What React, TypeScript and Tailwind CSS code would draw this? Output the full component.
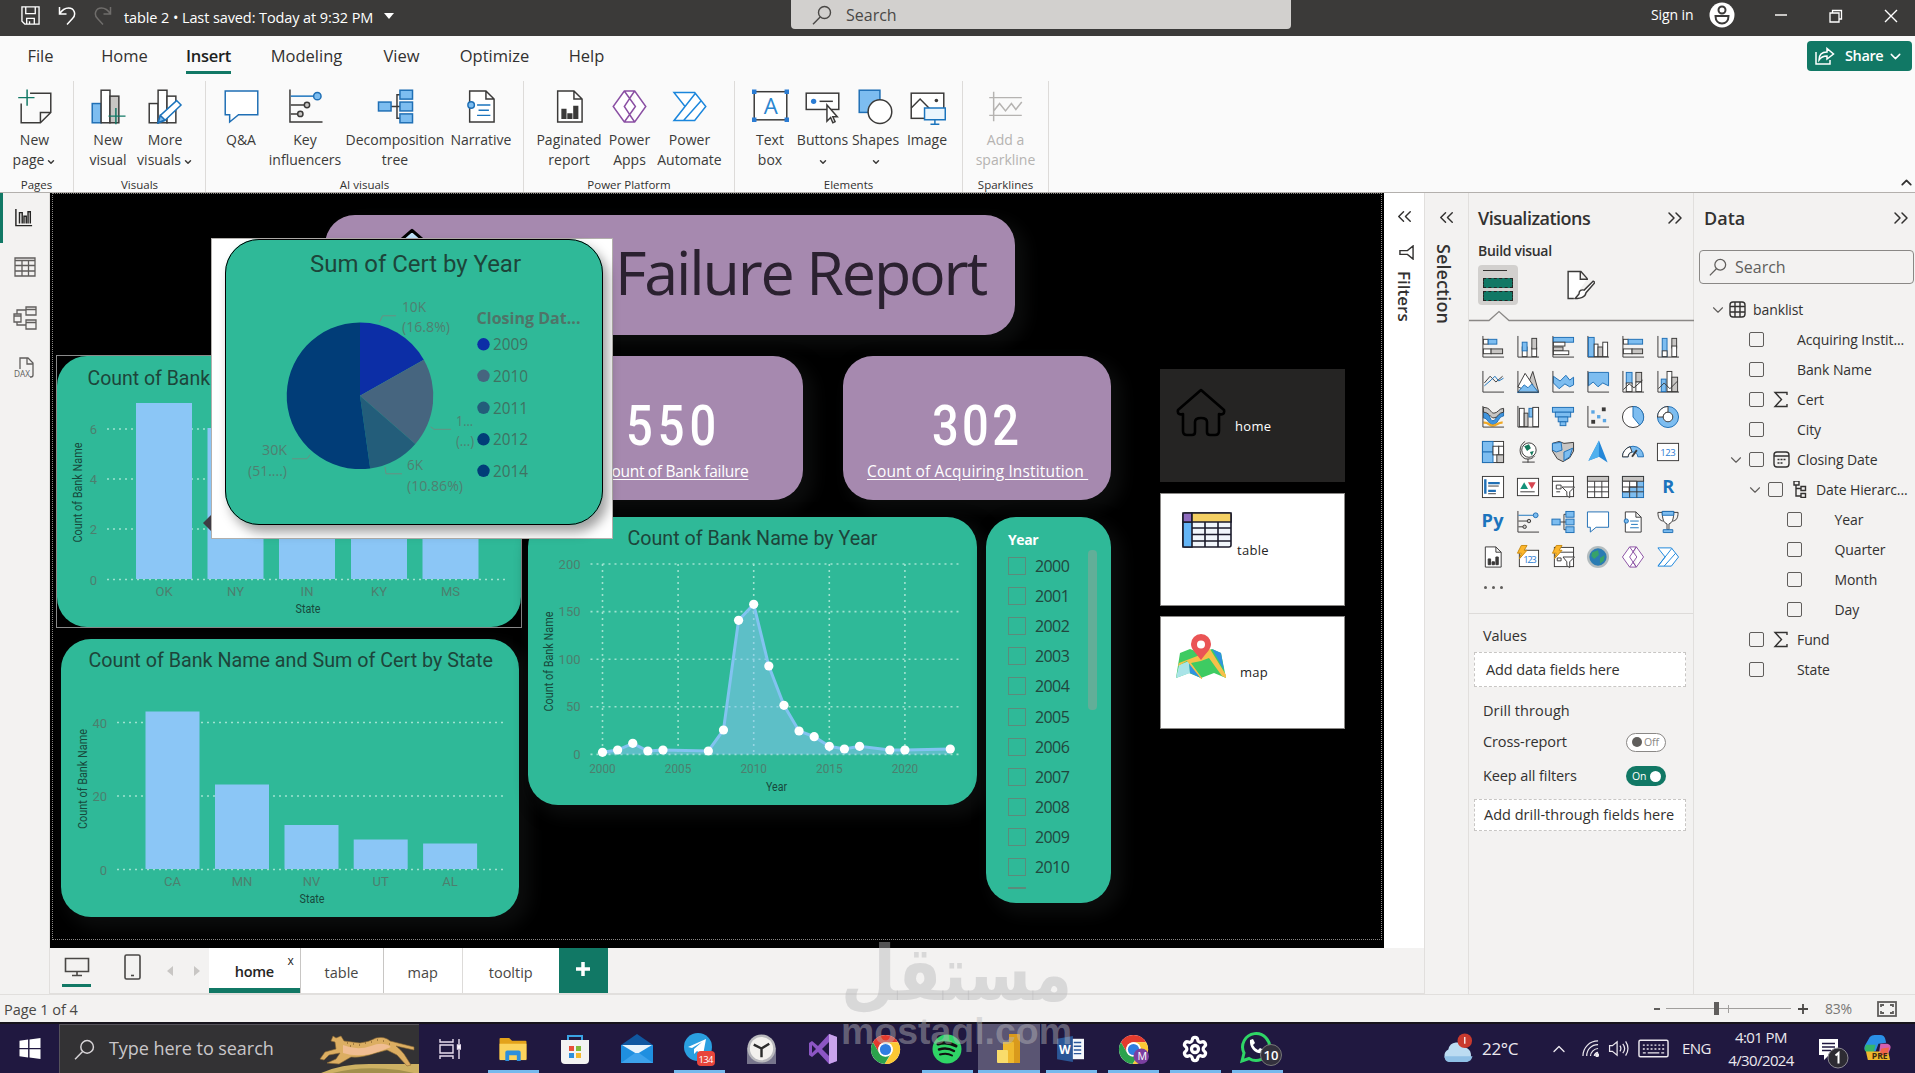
import type { ReactNode } from "react";
import { ChevronDown, ChevronUp, ChevronsLeft, ChevronsRight, Settings } from "lucide-react";
import clsx from "clsx";

const SANS = "font-['Open_Sans','Noto_Sans',sans-serif]";
const DIN = "font-['Roboto',sans-serif]";

const B = "fill-[#7dbdf0] stroke-[#1f6fb5]";
const G = "fill-[#c8c6c4] stroke-[#3b3a39]";
const W = "fill-white stroke-[#3b3a39]";
const L = "fill-none stroke-[#3b3a39]";
const BL = "fill-none stroke-[#1b74bd]";

function R({ x, y, w, h, c }: { x: number; y: number; w: number; h: number; c: string }) {
  return <rect x={x} y={y} width={w} height={h} className={c} />;
}

const axis = <path d="M1.5 .5v22h22" className={L} />;
const page = <path d="M4 1.5h11l5.500 5.500v15.500h-16.500zM15 1.500v5.500h5.500" className={W} />;
const bolt = <path d="M5 0h6l-3 5h3l-8 9 2-6h-4z" className="fill-[#fcb62c] stroke-[#c98a12]" />;

const ART: Record<string, ReactNode> = {
  stackedBar: <>{axis}<R x={2} y={4} w={5} h={5} c={W} /><R x={7} y={4} w={9} h={5} c={B} /><R x={2} y={14} w={8} h={5} c={W} /><R x={10} y={14} w={12} h={5} c={G} /></>,
  stackedColumn: <>{axis}<R x={6} y={12} w={5} h={10} c={W} /><R x={6} y={7} w={5} h={9} c={B} /><R x={16} y={13} w={5} h={9} c={W} /><R x={16} y={3} w={5} h={11} c={G} /></>,
  bar: <>{axis}<R x={2} y={2} w={21} h={5} c={B} /><R x={2} y={7} w={12} h={4} c={W} /><R x={2} y={12} w={10} h={4} c={G} /><R x={2} y={16} w={16} h={4} c={W} /></>,
  column: <>{axis}<R x={2} y={2} w={6} h={20} c={B} /><R x={8} y={9} w={4} h={13} c={W} /><R x={12} y={12} w={5} h={10} c={G} /><R x={17} y={7} w={5} h={15} c={W} /></>,
  bar100: <>{axis}<R x={2} y={4} w={5} h={5} c={W} /><R x={7} y={4} w={15} h={5} c={B} /><R x={2} y={14} w={9} h={5} c={W} /><R x={11} y={14} w={11} h={5} c={G} /></>,
  column100: <>{axis}<R x={6} y={3} w={5} h={19} c={B} /><R x={6} y={16} w={5} h={6} c={W} /><R x={16} y={3} w={5} h={10} c={G} /><R x={16} y={11} w={5} h={11} c={W} /></>,
  line: <>{axis}<path d="M3 13l6-7 6 6 7-6" className={L} /><path d="M3 16l7-6 4-4 4 5 5-3" className={BL} /></>,
  area: <><path d="M11 17L17 1l6 21z" className={G} /><path d="M1.500 17L9 3l8 12-5 7z" className={W} /><path d="M1 23l7-8 4 3 4-4 7 9z" className={B} />{axis}</>,
  stackedArea: <><path d="M2 6l7 5 6-6 4 5 4-3v8l-4 2-5-3-6 5-6-6z" className={B} />{axis}</>,
  area100: <><path d="M2 2h21v14l-6-3-5 4-5-5-5 4z" className={B} />{axis}</>,
  lineColumn: <>{axis}<R x={5} y={2} w={6} h={12} c={B} /><R x={5} y={13} w={6} h={9} c={W} /><R x={15} y={2} w={6} h={10} c={G} /><R x={15} y={12} w={6} h={10} c={W} /><path d="M2 20l6-6 5 4 9-8" className={L} /></>,
  lineCluster: <>{axis}<R x={5} y={9} w={5} h={13} c={B} /><R x={11} y={1} w={5} h={21} c={W} /><R x={16} y={7} w={6} h={15} c={G} /><path d="M2 19l6-6 6 6 8-8" className={L} /></>,
  ribbon: <><path d="M2 6c7 0 6 10 10 10s5-12 11-12v7c-5 0-6 9-11 9S7 13 2 13z" className="fill-[#3f93dc] stroke-[#1f6fb5]" /><path d="M2 2c8 0 7 6 11 6s5-5 10-5v4c-5 0-6 6-10 6S8 7 2 7z" className={G} /><path d="M2 18c5-1 6 3 10 3s6-4 10-3" className="fill-none stroke-[#f0a824] stroke-[2.500]" />{axis}</>,
  waterfall: <>{axis}<R x={3} y={3} w={5} h={19} c={W} /><R x={8} y={8} w={4} h={14} c={G} /><R x={13} y={3} w={4} h={9} c={B} /><R x={17} y={2} w={6} h={20} c={W} /></>,
  funnel: <><R x={1} y={2} w={22} h={5} c={B} /><R x={4} y={7} w={16} h={5} c={B} /><R x={7} y={12} w={10} h={5} c={B} /><R x={9} y={17} w={6} h={4} c={B} /></>,
  scatter: <>{axis}<rect x="16" y="2" width="4" height="4" fill="#3b3a39" /><rect x="5" y="5" width="3.500" height="3.500" fill="#5aa6e4" /><rect x="11" y="10" width="3.500" height="3.500" fill="#5aa6e4" /><rect x="5" y="15" width="4" height="4" fill="#3b3a39" /><rect x="17" y="14" width="3.500" height="3.500" fill="#5aa6e4" /></>,
  pie: <><circle cx="12" cy="12" r="11" className={W} /><path d="M12 1a11 11 0 0 1 7 19.500L12 12z" className={B} /></>,
  donut: <><circle cx="12" cy="12" r="11" className={B} /><path d="M12 1A11 11 0 0 0 1 12h6a5 5 0 0 1 5-5z" className={W} /><circle cx="12" cy="12" r="5" className={W} /></>,
  treemap: <><R x={1} y={1} w={22} h={22} c={W} /><R x={1} y={1} w={11} h={11} c={B} /><R x={1} y={12} w={11} h={11} c={B} /><R x={12} y={6} w={6} h={9} c={W} /><R x={18} y={6} w={5} h={9} c={W} /><R x={16} y={15} w={7} h={8} c={G} /></>,
  map: <><circle cx="13" cy="10" r="7.500" className={W} /><path d="M8 6l5-2 2 4-4 3zM14 12l4-1-2 5z" fill="#15795c" /><path d="M9 1C2 5 2 16 9 19c4 1 8 0 10-3M12 19v4M6 22.500h13" className={L} /></>,
  filledMap: <><path d="M1 3l7-2 5 2 10-1v9l-4 7-7 4-6-3-5-8z" className={G} /><path d="M1 3l9-1 1 8-6 2-4-2zM13 12l9-4-3 9-6 4z" className={B} /></>,
  azureMap: <><path d="M13 0l9 23-9-6-11 4z" fill="#2487d8" /><path d="M13 0v17l-11 4z" fill="#4fb0ee" /></>,
  gauge: <><path d="M1 17a11 11 0 0 1 22 0h-6a5 5 0 0 0-10 0z" className={B} /><path d="M1 17A11 11 0 0 1 9 6.500l2 5.500a5 5 0 0 0-4 5z" className={W} /><path d="M11 17l5-7" className="stroke-[#3b3a39] stroke-2" /></>,
  card: <><R x={1} y={3} w={22} h={18} c={W} /><text x="4" y="16" textLength="16" className="fill-[#2b7cd3] text-[10px]">123</text></>,
  multiCard: <><R x={1} y={1} w={22} h={22} c={W} /><path d="M4 4v15M7 8h12M7 16h8" className="stroke-[#1f6fb5] stroke-[2.500]" /><path d="M7 11h11M7 19h8" className={L} /></>,
  kpi: <><R x={1} y={3} w={22} h={18} c={W} /><path d="M4 14l4-7 4 7z" fill="#14917a" /><path d="M12 7h8l-4 7z" fill="#d64550" /><path d="M4 17h15" className={L} /></>,
  slicer: <><R x={1} y={1} w={22} h={21} c={W} /><path d="M1 6h22M5 10h5v4h-5zM5 17h4" className={L} /><path d="M11 12h13l-5 5v6l-3-2v-4z" className={W} /></>,
  table: <><R x={1} y={1} w={22} h={22} c={W} /><R x={1} y={1} w={22} h={5} c={G} /><path d="M1 12h22M1 17h22M8.500 6v17M16 6v17" className={L} /></>,
  matrix: <><R x={1} y={1} w={22} h={22} c={B} /><R x={1} y={1} w={22} h={5} c={G} /><path d="M1 6h15v6h-8v5H1z" className={W} /><path d="M1 12h22M1 17h22M8.500 6v17M16 6v17" className={L} /></>,
  r: <text x="6" y="18" className="fill-[#1b74bd] text-[19px] font-bold">R</text>,
  py: <text x="0" y="17" textLength="23" className="fill-[#1b74bd] text-[19px] font-bold">Py</text>,
  key: <>{axis}<path d="M2 5h17" className={BL} /><path d="M2 11h10M2 17h6" className={L} /><circle cx="20" cy="5" r="2.500" className={B} /><circle cx="13" cy="11" r="1.800" className={G} /><circle cx="8.500" cy="17" r="1.800" className={G} /></>,
  tree: <><path d="M9 12h4M18 4h-5v16h5M13 12h5" className={L} /><R x={.500} y={9} w={8.500} h={6} c={B} /><R x={15} y={1} w={8.500} h={6} c={B} /><R x={15} y={9} w={8.500} h={6} c={B} /><R x={15} y={17} w={8.500} h={6} c={B} /></>,
  qa: <path d="M1 1.500h22v16h-13l-6 5v-5h-3z" className="fill-white stroke-[#1f6fb5]" />,
  narrative: <>{page}<path d="M9 11h9M10 14.500h7M9 18h9" className={BL} /><circle cx="5" cy="11" r="2.200" className={B} /></>,
  trophy: <><path d="M6 2H1.500c0 6 2 9 6 9M18 2h4.500c0 6-2 9-6 9" className={L} /><path d="M6 1h12c0 9-2 12-5 13v6h-2v-6C8 13 6 10 6 1z" className={W} /><path d="M6 1h12v4H6zM7 20h10v3H7z" className={B} /></>,
  paginated: <>{page}<path d="M7 20v-6h2.500v6zM11 20v-3h2.500v3zM15 20v-8h2.500v8z" className="fill-[#3b3a39] stroke-[#3b3a39]" /></>,
  cardNew: <><R x={3} y={5} w={20} h={17} c={W} /><text x="7" y="18" textLength="14" className="fill-[#2b7cd3] text-[10px]">123</text>{bolt}</>,
  slicerNew: <><R x={3} y={2} w={20} h={20} c={W} /><path d="M3 7h20M6 13h4v3H6z" className={L} /><path d="M12 12h12l-5 5v6l-3-2v-4z" className={W} />{bolt}</>,
  globe: <><circle cx="12" cy="12" r="11.500" fill="#b3bcbe" /><circle cx="12" cy="12" r="9" fill="#2b7cb3" /><path d="M6 7l6-2 1 5-5 4-3-3zM14 13l5-3-1 6-4 3z" fill="#37a26a" /></>,
  apps: <path d="M8.500 1.500h7L23 12l-7.500 10.500h-7L1 12zM8.500 1.500L16 12 8.500 22.500M15.500 1.500L8.500 12l7 10.500M12 6.500l3.500-5M12 17.500l3.500 5" className="fill-white stroke-[#8a4fa3]" />,
  automate: <path d="M1.500 2.500h14l7.500 9.500-7.500 9.500h-14L9 12zM2 21l14-18M8 21.500l12-13.500" className="fill-white stroke-[#1b86dc]" />,
  newPage: <><path d="M3 10v13h13l7-7V3H9M16 23v-7h7" className={L} /><path d="M7 .5v11M1 6h11" className="fill-none stroke-[#117865]" /></>,
  newVisual: <><R x={1} y={10} w={6} h={13} c={B} /><R x={7} y={1} w={6} h={22} c={W} /><R x={13} y={5} w={6} h={18} c={G} /><path d="M17 13v11M12 18.500h11.500" className="stroke-[#117865]" /></>,
  moreVisuals: <><R x={1} y={10} w={6} h={13} c={W} /><R x={7} y={1} w={6} h={22} c={W} /><R x={13} y={5} w={6} h={18} c={W} /><path d="M7 23l1.500-5L19.500 8l3 3-11 10.500z" className="fill-white stroke-[#1b74bd]" /><path d="M7 23l1.500-5 3 3z" className={B} /></>,
  textBox: <><R x={1} y={2} w={22} h={19} c={W} /><text x="7.500" y="17" textLength="10" className="fill-[#2b86d0] text-[15px]">A</text><path d="M0 1h2v2H0zM22 1h2v2h-2zM0 20h2v2H0zM22 20h2v2h-2z" className="fill-[#2b7cd3] stroke-[#2b7cd3]" /></>,
  buttons: <><R x={1} y={3} w={22} h={11} c={W} /><circle cx="6" cy="8.500" r="1.800" fill="#2b7cd3" /><path d="M10 8.500h9" className={L} /><path d="M15 11v11l2.500-2.500 1.500 3.500 1.500-.8-1.500-3.200h3z" className={W} /></>,
  shapes: <><R x={1} y={1} w={14} h={15} c={B} /><circle cx="15" cy="15.500" r="8" className={W} /></>,
  image: <><R x={1} y={3} w={22} h={17} c={W} /><path d="M1 13l6-6 7 7" className={L} /><circle cx="18" cy="8" r="1.200" fill="#3b3a39" /><path d="M10 13h14v8H10zM17 21v3M14 24h6" className="fill-[#eaf5fd] stroke-[#1b74bd]" /></>,
  sparkline: <path d="M4 2v20M1 6h22M1 18h22M4 15l4-5 4 5 4-5 3 4 4-5" className="fill-none stroke-[#b5b3b1]" />,
  brush: <><path d="M8 22.500H3.500V1.500h10l5 5.500M13 1.500v6h6" className={W} /><path d="M23 9l-7 7c-2-.5-4 0-4 3l-3 3.500c4 .5 8-1 8.500-4.500l7-8z" className={W} /></>,
};

const sizes = {
  sm: "h-6 w-6",
  lg: "h-[37px] w-[37px]",
};

function Art({ name, size = "sm" }: { name: string; size?: "sm" | "lg" }) {
  return (
    <svg viewBox="-0.5 -0.5 25 25" className={clsx("shrink-0 overflow-visible", sizes[size])} strokeWidth={1}>
      {ART[name]}
    </svg>
  );
}

function SearchIcon({ className }: { className: string }) {
  return (
    <svg viewBox="0 0 20 20" className={className} fill="none" stroke="currentColor" strokeWidth={1.4}>
      <circle cx="12.500" cy="7.500" r="6" />
      <path d="M8.200 12L1 19.300" />
    </svg>
  );
}

/* ---------- title bar + ribbon ---------- */

function TitleBar() {
  return (
    <div className="flex h-9 shrink-0 items-center bg-[#3b3a39] text-white">
      <svg viewBox="0 0 20 20" className="ml-[21px] h-[19px] w-[19px] -translate-y-[3px]" fill="none" stroke="#fff" strokeWidth={1.400}>
        <path d="M1 1h18v18H4l-3-3zM5 1v7h10V1M6 19v-6h8v6M9 19v-3" />
      </svg>
      <svg viewBox="0 0 18 19" className="ml-[18px] h-[19px] w-[18px] -translate-y-[3px]" fill="none" stroke="#fff" strokeWidth={1.500}>
        <path d="M1.500 1v7h7M1.500 8C4 4 7 2 10.500 2c6 0 8 6.500 4 10.500L9 18.500" />
      </svg>
      <svg viewBox="0 0 18 19" className="ml-[18px] h-[19px] w-[18px] -translate-y-[3px]" fill="none" stroke="#6f6d6b" strokeWidth={1.500}>
        <path d="M16.500 1v7h-7M16.500 8C14 4 11 2 7.500 2c-6 0-8 6.500-4 10.500L9 18.500" />
      </svg>
      <span className="ml-[12px] w-[260px] text-[14.500px] leading-none tracking-[-0.1px] whitespace-nowrap">
        table 2 • Last saved: Today at 9:32 PM
      </span>
      <span className="h-0 w-0 -translate-y-[2px] border-x-[5px] border-t-[6px] border-x-transparent border-t-white" />
      <div className="ml-[397px] flex h-[29px] w-[500px] items-center self-start rounded-b-sm bg-[#d2d0ce] text-[#4a4846]">
        <SearchIcon className="ml-[21px] h-5 w-5" />
        <span className="ml-[14px] text-[16px] leading-none">Search</span>
      </div>
      <span className="ml-[360px] w-[46px] text-[14px] leading-none tracking-[-0.1px] whitespace-nowrap -translate-y-[3px]">Sign in</span>
      <svg viewBox="0 0 26 26" className="ml-3 h-[26px] w-[26px] -translate-y-[3px]">
        <circle cx="13" cy="13" r="12.500" fill="#fff" />
        <circle cx="13" cy="8" r="3.500" fill="#fff" stroke="#3b3a39" strokeWidth="2" />
        <path d="M6.500 14h13c0 5-3 7.500-6.500 7.500S6.500 19 6.500 14z" fill="#fff" stroke="#3b3a39" strokeWidth="2" />
      </svg>
      <span className="ml-[40px] h-[2px] w-3 -translate-y-[3px] bg-[#c8c6c4]" />
      <svg viewBox="0 0 14 14" className="ml-[42px] h-3.5 w-3.5 -translate-y-[2px]" fill="none" stroke="#fff" strokeWidth={1.300}>
        <path d="M1 4h9v9H1zM3.500 4V1.500h9V10H10" />
      </svg>
      <svg viewBox="0 0 14 14" className="ml-[41px] h-3.5 w-3.5 -translate-y-[2px]" stroke="#fff" strokeWidth={1.400}>
        <path d="M1 1l12 12M13 1L1 13" />
      </svg>
    </div>
  );
}

const TABS = [
  { label: "File", w: "w-[81px]" },
  { label: "Home", w: "w-[87px]" },
  { label: "Insert", w: "w-[81px]" },
  { label: "Modeling", w: "w-[115px]" },
  { label: "View", w: "w-[75px]" },
  { label: "Optimize", w: "w-[111px]" },
  { label: "Help", w: "w-[73px]" },
];

function Tabs() {
  return (
    <div className="flex h-10 shrink-0 items-center bg-[#fafafa] text-[16.500px] text-[#323130]">
      {TABS.map((t) => (
        <div key={t.label} className={clsx("flex h-full items-center justify-center", t.w)}>
          <span
            className={clsx(
              "flex h-full items-center",
              t.label === "Insert" && "relative font-semibold tracking-[-0.3px] text-[#201f1e]",
            )}
          >
            {t.label}
            {t.label === "Insert" && <span className="absolute inset-x-0 bottom-[2px] h-[3px] bg-[#117865]" />}
          </span>
        </div>
      ))}
      <button className="mr-[3px] ml-auto flex h-[30px] w-[105px] items-center rounded bg-[#117865] text-[14.500px] font-semibold text-white">
        <svg viewBox="0 0 20 18" className="ml-2 h-[18px] w-5" fill="none" stroke="#fff" strokeWidth={1.500}>
          <path d="M1 5v12h14v-4M4 13c0-5 3-8 8-8V1.500L18.500 7 12 12V9C8 9 6 10 4 13z" />
        </svg>
        <span className="ml-[10px] tracking-[-0.4px]">Share</span>
        <ChevronDown className="ml-1 h-[17px] w-[17px]" strokeWidth={2} />
      </button>
    </div>
  );
}

interface RibbonItem {
  icon: string;
  lines: string[];
  w: string;
  menu?: boolean;
  off?: boolean;
}

const GROUPS: { label: string; w: string; pad?: string; items: RibbonItem[] }[] = [
  {
    label: "Pages",
    w: "w-[74px]",
    pad: "pr-1",
    items: [{ icon: "newPage", lines: ["New", "page"], w: "w-[69px]", menu: true }],
  },
  {
    label: "Visuals",
    w: "w-[132px]",
    pad: "pr-[7px]",
    items: [
      { icon: "newVisual", lines: ["New", "visual"], w: "w-[58px]" },
      { icon: "moreVisuals", lines: ["More", "visuals"], w: "w-[56px]", menu: true },
    ],
  },
  {
    label: "AI visuals",
    w: "w-[318px]",
    pad: "pr-[5px]",
    items: [
      { icon: "qa", lines: ["Q&A"], w: "w-[58px]" },
      { icon: "key", lines: ["Key", "influencers"], w: "w-[70px]" },
      { icon: "tree", lines: ["Decomposition", "tree"], w: "w-[110px]" },
      { icon: "narrative", lines: ["Narrative"], w: "w-[62px]" },
    ],
  },
  {
    label: "Power Platform",
    w: "w-[211px]",
    items: [
      { icon: "paginated", lines: ["Paginated", "report"], w: "w-[66px]" },
      { icon: "apps", lines: ["Power", "Apps"], w: "w-[55px]" },
      { icon: "automate", lines: ["Power", "Automate"], w: "w-[65px]" },
    ],
  },
  {
    label: "Elements",
    w: "w-[228px]",
    items: [
      { icon: "textBox", lines: ["Text", "box"], w: "w-[51px]" },
      { icon: "buttons", lines: ["Buttons"], w: "w-[54px]", menu: true },
      { icon: "shapes", lines: ["Shapes"], w: "w-[52px]", menu: true },
      { icon: "image", lines: ["Image"], w: "w-[51px]" },
    ],
  },
  { label: "Sparklines", w: "w-[86px]", items: [{ icon: "sparkline", lines: ["Add a", "sparkline"], w: "w-[84px]", off: true }] },
];

function Ribbon() {
  return (
    <div className="flex h-[117px] shrink-0 border-b border-[#b3b0ad] bg-[#fafafa] pt-[5px]">
      {GROUPS.map((g) => (
        <div key={g.label} className={clsx("flex shrink-0 flex-col items-center border-r border-[#dddbd9]", g.w)}>
          <div className={clsx("flex h-[90px] justify-center pt-[7px]", g.pad)}>
            {g.items.map((it) => (
              <div key={it.icon} className={clsx("flex shrink-0 flex-col items-center", it.w)}>
                <Art name={it.icon} size="lg" />
                <div
                  className={clsx(
                    "mt-[5px] text-center text-[14px] leading-5 whitespace-nowrap",
                    it.off ? "text-[#b5b3b1]" : "text-[#3b3a39]",
                  )}
                >
                  <div>{it.lines[0]}</div>
                  <div className="flex h-5 items-center justify-center">
                    {it.lines[1]}
                    {it.menu && <ChevronDown className="mt-1 ml-0.5 h-[10px] w-[10px]" strokeWidth={3.5} />}
                  </div>
                </div>
              </div>
            ))}
          </div>
          <span className="mt-[7px] text-[11.500px] leading-4 text-[#323130]">{g.label}</span>
        </div>
      ))}
      <ChevronUp className="mt-[93px] ml-auto h-[17px] w-[17px] text-[#323130]" strokeWidth={2.5} />
    </div>
  );
}

/* ---------- report canvas ---------- */

interface LabelProps {
  x: number;
  y: number;
  len?: number;
  anchor?: "start" | "middle" | "end";
  className: string;
  rotate?: boolean;
  children: string;
}

function Label({ x, y, len, anchor = "start", className, rotate, children }: LabelProps) {
  return (
    <text
      x={x}
      y={y}
      textAnchor={anchor}
      textLength={len}
      lengthAdjust="spacingAndGlyphs"
      className={className}
      transform={rotate ? `rotate(-90 ${x} ${y})` : undefined}
    >
      {children}
    </text>
  );
}

const CARD = "block shrink-0 rounded-[30px] bg-[#2fb998] shadow-[8px_8px_16px_4px_#0b0c0c]";
const TICK = "fill-[#4c7f6e] text-[13px]";
const AXIS_TITLE = "fill-[#17493c] text-[12px]";
const HEADING = "fill-[#1d453a] text-[20px]";
const GRID = "stroke-[#9fe2d0] [stroke-dasharray:2_4] stroke-[1.6]";

interface ColumnChartProps {
  grid: { v: string; y: number }[];
  gridX: [number, number];
  base: number;
  bars: { name: string; x: number; top: number }[];
  barW: number;
  titleX: number;
  titleY: number;
  stateX: number;
}

function ColumnChart({ grid, gridX, base, bars, barW, titleX, titleY, stateX }: ColumnChartProps) {
  return (
    <>
      {grid.map((g) => (
        <g key={g.v}>
          <line x1={gridX[0]} x2={gridX[1]} y1={g.y} y2={g.y} className={GRID} />
          <Label x={gridX[0] - 10} y={g.y + 5} anchor="end" className={TICK}>{g.v}</Label>
        </g>
      ))}
      {bars.map((b) => (
        <g key={b.name}>
          <rect x={b.x} y={b.top} width={barW} height={base - b.top} fill="#8bc6f6" />
          <Label x={b.x + barW / 2} y={base + 16.5} anchor="middle" className={TICK}>{b.name}</Label>
        </g>
      ))}
      <Label x={titleX} y={titleY} len={100} anchor="middle" rotate className={AXIS_TITLE}>Count of Bank Name</Label>
      <Label x={stateX} y={base + 34} len={25} anchor="middle" className={AXIS_TITLE}>State</Label>
    </>
  );
}

function SelectedChart() {
  return (
    <div className="h-[273px] w-[466px] shrink-0 border border-[#8a8a8a]">
      <svg viewBox="57 356 464 271" className={clsx("block h-[271px] w-[464px] rounded-[30px] bg-[#2fb998]", DIN)}>
        <Label x={87.5} y={385} len={122.5} className={HEADING}>Count of Bank</Label>
        <ColumnChart
          grid={[{ v: "6", y: 429 }, { v: "4", y: 479 }, { v: "2", y: 529 }, { v: "0", y: 579.500 }]}
          gridX={[107, 508]}
          base={579}
          barW={56}
          bars={[
            { name: "OK", x: 136, top: 403 },
            { name: "NY", x: 207.5, top: 428 },
            { name: "IN", x: 279, top: 453 },
            { name: "KY", x: 351, top: 453 },
            { name: "MS", x: 422.5, top: 453 },
          ]}
          titleX={82}
          titleY={492.5}
          stateX={308}
        />
      </svg>
    </div>
  );
}

function StateChart() {
  return (
    <svg viewBox="61.500 639 458 278" className={clsx("mt-[11px] ml-[5px] h-[278px] w-[458px]", CARD, DIN)}>
      <Label x={89} y={667} len={404.500} className={HEADING}>Count of Bank Name and Sum of Cert by State</Label>
      <ColumnChart
        grid={[{ v: "40", y: 722.5 }, { v: "20", y: 796 }, { v: "0", y: 869.500 }]}
        gridX={[117.5, 506]}
        base={869}
        barW={54}
        bars={[
          { name: "CA", x: 146, top: 711.5 },
          { name: "MN", x: 215.5, top: 784.5 },
          { name: "NV", x: 285, top: 825 },
          { name: "UT", x: 354.2, top: 839.500 },
          { name: "AL", x: 423.600, top: 843.5 },
        ]}
        titleX={87}
        titleY={779}
        stateX={312.500}
      />
    </svg>
  );
}

const POINTS: [number, number][] = [
  [2000, 752.3], [2001, 750], [2002, 743.3], [2003, 751], [2004, 750], [2007, 751], [2008, 730], [2009, 620.3],
  [2010, 604.3], [2011, 666], [2012, 705.3], [2013, 731], [2014, 736.7], [2015, 746.3], [2016, 749], [2017, 746.3],
  [2019, 750], [2020, 750], [2023, 749],
];

const yearX = (year: number) => 603 + (year - 2000) * 15.12;

function YearChart() {
  const line = POINTS.map(([yr, y]) => `${yearX(yr)},${y}`).join(" ");
  return (
    <svg viewBox="528.500 517 448.500 288" className={clsx("h-[288px] w-[448.5px]", CARD, DIN)}>
      <Label x={628} y={544.5} len={250} className={HEADING}>Count of Bank Name by Year</Label>
      {["200", "150", "100", "50", "0"].map((v, i) => (
        <g key={v}>
          <line x1={591} x2={961} y1={564 + i * 47.600} y2={564 + i * 47.600} className={GRID} />
          <Label x={581} y={568.5 + i * 47.6} anchor="end" className={TICK}>{v}</Label>
        </g>
      ))}
      {[2000, 2005, 2010, 2015, 2020].map((yr) => (
        <g key={yr}>
          <line x1={yearX(yr)} x2={yearX(yr)} y1={564} y2={754} className={GRID} />
          <Label x={yearX(yr)} y={773} len={26.500} anchor="middle" className={TICK}>{String(yr)}</Label>
        </g>
      ))}
      <polygon points={`603,754.5 ${line} ${yearX(2023)},754.5`} className="fill-[#8bc6f6]/50" />
      <polyline points={line} className="fill-none stroke-[#82c3f0] stroke-[3]" />
      {POINTS.map(([yr, y]) => <circle key={yr} cx={yearX(yr)} cy={y} r={4.600} fill="#fff" />)}
      <Label x={553} y={661.5} len={100} anchor="middle" rotate className={AXIS_TITLE}>Count of Bank Name</Label>
      <Label x={777} y={791} len={21} anchor="middle" className={AXIS_TITLE}>Year</Label>
    </svg>
  );
}

function Slicer() {
  const years = [2000, 2001, 2002, 2003, 2004, 2005, 2006, 2007, 2008, 2009, 2010];
  return (
    <div className={clsx("relative ml-[9.5px] h-[386px] w-[125px] pt-[13px] pl-[22px]", CARD)}>
      <div className="text-[14px] leading-5 font-bold tracking-[-0.4px] text-white">Year</div>
      <div className="mt-px">
        {years.map((y) => (
          <label key={y} className="flex h-[30.100px] items-center text-[16px] tracking-[-0.6px] text-[#21473d]">
            <span className="mr-[9px] h-[18px] w-[18px] border border-[#5b8b7b]" />
            {y}
          </label>
        ))}
      </div>
      <span className="mt-[5px] block h-[3px] w-[18px] border-t-2 border-[#5b8b7b]" />
      <span className="absolute top-[33px] right-[14px] h-40 w-[9px] rounded-sm bg-[#62ae98]" />
    </div>
  );
}

interface KpiProps {
  value: string;
  label: string;
  className: string;
  valueClass: string;
  labelClass: string;
}

function Kpi({ value, label, className, valueClass, labelClass }: KpiProps) {
  return (
    <div className={clsx("flex h-36 w-[268px] shrink-0 flex-col items-start rounded-[30px] bg-[#a689af] text-white shadow-[8px_8px_16px_4px_#0b0c0c]", className)}>
      <div className={clsx("mt-[42px] origin-left scale-x-[.84] text-[56px] leading-[56px] font-medium", DIN, valueClass)}>{value}</div>
      <div className={clsx("mt-[7px] text-[15.500px] leading-5 whitespace-pre underline underline-offset-2", labelClass)}>{label}</div>
    </div>
  );
}

function HouseIcon({ className, fill }: { className: string; fill: string }) {
  return (
    <svg viewBox="0 0 50 50" className={className} fill={fill} stroke="#000" strokeWidth={2.6} strokeLinejoin="round">
      <path d="M25 2L2 22c-1 4 2 5 5 4v17q0 4 4 4h5q3 0 3-3V34q0-4 6-4t6 4v10q0 3 3 3h5q4 0 4-4V26c3 1 6 0 5-4z" />
    </svg>
  );
}

function TableIcon() {
  return (
    <svg viewBox="0 0 50 36" className="h-9 w-[50px]" stroke="#1b1b2b" strokeWidth={1.600}>
      <rect x="1" y="1" width="48" height="34" rx="2" fill="#f1f6fb" />
      <path d="M1 10h9v25H1z" fill="#64b5f6" />
      <path d="M1 1h9v9H1z" fill="#8e6bbf" />
      <path d="M10 1h39v9H10z" fill="#f4cf63" />
      <path d="M10 16h39M10 22.500h39M10 29h39M23 10v25M36 10v25" fill="none" />
    </svg>
  );
}

function MapIcon() {
  return (
    <svg viewBox="0 0 50 45" className="h-[45px] w-[50px]">
      <path d="M4 19l10-4 11 4 11-4 9 4 5 25-12-5-13 5-12-5L0 44z" fill="#3ecb62" />
      <path d="M3 31l10-4 1 12L0 44z" fill="#a9e4e8" />
      <path d="M13 27l12 17-11-5zM36 15l9 4 3 17z" fill="#2f93e0" />
      <path d="M3 29l21-8 10-6 16 26v3l-4-2-13-18-8 3-10 2 11 15v2L11 27l-9 5z" fill="#f6c04a" />
      <path d="M25 26c-6-8-10-11-10-16a10 10 0 0 1 20 0c0 5-4 8-10 16z" fill="#ea5455" />
      <circle cx="25" cy="10.500" r="4" fill="#fff" />
    </svg>
  );
}

function PageNav() {
  return (
    <div className="mt-[14px] ml-[49px] flex w-[185px] shrink-0 flex-col gap-[10.5px] text-[13px] leading-4 tracking-[0.3px]">
      <div className="flex h-[113px] bg-[#252423] text-white">
        <HouseIcon className="mt-[18px] ml-4 h-[52px] w-[50px]" fill="none" />
        <span className="mt-[49px] ml-[9px]">home</span>
      </div>
      <div className="flex h-[113px] border border-[#8a8886] bg-white pt-[18px] pl-[21px]">
        <TableIcon />
        <span className="mt-[30px] ml-[5px] text-[#252423]">table</span>
      </div>
      <div className="flex h-[113px] border border-[#8a8886] bg-white pt-[17px] pl-[15px]">
        <MapIcon />
        <span className="mt-[30px] ml-[14px] text-[#252423]">map</span>
      </div>
    </div>
  );
}

const SLICES = [
  { from: 0, to: 60.5, fill: "#0c2ea6" },
  { from: 60.500, to: 131, fill: "#46657f" },
  { from: 131, to: 172, fill: "#235d7a" },
  { from: 172, to: 360, fill: "#013d78" },
];

function slicePath(from: number, to: number) {
  const at = (deg: number) => {
    const a = (deg * Math.PI) / 180;
    return `${360 + 73.3 * Math.sin(a)} ${396 - 73.3 * Math.cos(a)}`;
  };
  return `M360 396L${at(from)}A73.3 73.3 0 ${to - from > 180 ? 1 : 0} 1 ${at(to)}z`;
}

const LEGEND = [
  { year: "2009", y: 344.5, fill: "#0c2ea6" },
  { year: "2010", y: 376, fill: "#46657f" },
  { year: "2011", y: 408, fill: "#235d7a" },
  { year: "2012", y: 439.500, fill: "#013d78" },
  { year: "2014", y: 471, fill: "#013d78" },
];

function PieTooltip() {
  const soft = "fill-[#4f7f70] text-[15px]";
  return (
    <div className="absolute top-[45px] left-[161px] h-[301px] w-[402px] border border-[#b3b0ad] bg-white pl-[12.5px]">
      <span className="absolute top-[276px] -left-[9px] h-0 w-0 border-y-8 border-r-8 border-y-transparent border-r-[#3f3b43]" />
      <svg
        viewBox="225 239.200 378 286"
        className={clsx("block h-[286px] w-[378px] rounded-[34px] bg-[#2fb998] shadow-[5px_7px_12px_rgba(0,0,0,.38)] outline-[1.5px] -outline-offset-1 outline-black", SANS)}
      >
        <Label x={310} y={272} len={211} className="fill-[#1d453a] font-['Roboto'] text-[23px]">Sum of Cert by Year</Label>
        {SLICES.map((s) => <path key={s.from} d={slicePath(s.from, s.to)} fill={s.fill} />)}
        <path
          d="M379.600 322l3-6H396M430.600 427l3.500 2.500H451M385 467l1 7h16M310 455l-3 4h-15"
          className="fill-none stroke-[#6a8f82]"
        />
        <Label x={402} y={312} len={24} className={soft}>10K</Label>
        <Label x={402} y={332.5} len={48} className={soft}>(16.8%)</Label>
        <Label x={456} y={426.500} len={17} className={soft}>1...</Label>
        <Label x={456} y={446} len={18} className={soft}>(...)</Label>
        <Label x={407} y={470.500} len={16} className={soft}>6K</Label>
        <Label x={407} y={491} len={56} className={soft}>(10.86%)</Label>
        <Label x={262} y={455.500} len={25} className={soft}>30K</Label>
        <Label x={248} y={476} len={39} className={soft}>(51....)</Label>
        <Label x={476.5} y={324} len={104} className="fill-[#4f7468] text-[16px] font-bold">Closing Dat...</Label>
        {LEGEND.map((l) => (
          <g key={l.year}>
            <circle cx={483.500} cy={l.y} r={6.200} fill={l.fill} />
            <Label x={493} y={l.y + 5.8} len={35} className="fill-[#3f7262] text-[16px]">{l.year}</Label>
          </g>
        ))}
      </svg>
    </div>
  );
}

function Canvas() {
  return (
    <div className="relative h-[755px] w-[1334px] shrink-0 overflow-hidden bg-black pt-[22px]">
      <div className="ml-[275px] flex h-[120px] w-[690px] rounded-[30px] bg-[#a689af] pr-[29px] pl-[57px] shadow-[8px_8px_16px_4px_#0b0c0c]">
        <HouseIcon className="mt-[12px] h-[62px] w-[60px]" fill="#bfe3fb" />
        <span className="mt-[17px] ml-auto text-[61px] leading-[80px] tracking-[-2.15px] whitespace-nowrap text-[#2b2130]">Failure Report</span>
      </div>
      <div className="mt-5 ml-[6px] flex items-start">
        <div className="shrink-0">
          <SelectedChart />
          <StateChart />
        </div>
        <div className="mt-px ml-[6px] shrink-0">
          <div className="ml-[7px] flex gap-[40px]">
            <Kpi
              value="550"
              label="Count of Bank failure"
              className="pl-[67px]"
              valueClass="ml-[24px] tracking-[6px]"
              labelClass="tracking-[-0.3px]"
            />
            <Kpi
              value="302"
              label="Count of Acquiring Institution "
              className="pl-[24px]"
              valueClass="ml-[65px] tracking-[4px]"
              labelClass="tracking-[0.15px]"
            />
          </div>
          <div className="mt-[17px] flex items-start">
            <YearChart />
            <Slicer />
          </div>
        </div>
        <PageNav />
      </div>
      <div className="pointer-events-none absolute top-0 right-[2px] bottom-[8px] left-[2px] border border-dotted border-[#8a8886]" />
      <PieTooltip />
    </div>
  );
}

/* ---------- side panes ---------- */

function LeftRail() {
  return (
    <div className="flex w-[50px] shrink-0 flex-col items-center border-r border-[#e1dfdd] bg-[#f3f2f1]">
      <div className="flex h-[50px] w-full items-center border-l-[3px] border-[#117865] pl-[12px]">
        <svg viewBox="0 0 20 20" className="h-[18px] w-[18px]" fill="none" stroke="#252423" strokeWidth={1.600}>
          <path d="M1 0v18.500h18M5 16V4h3v12M10 16V8h2.500v8M14.500 16V3H17v13" />
        </svg>
      </div>
      <svg viewBox="0 0 22 20" className="mt-[14px] h-5 w-[22px]" fill="none" stroke="#605e5c" strokeWidth={1.300}>
        <path d="M1 1h20v18H1zM1 3.500h20M1 8.500h20M1 14h20M8 3.500V19M14.500 3.500V19" />
      </svg>
      <svg viewBox="0 0 24 24" className="mt-[29px] h-[24px] w-[24px]" fill="none" stroke="#605e5c" strokeWidth={1.300}>
        <path d="M1 8h7v8H1zM1 10h7M13 1h10v8H13zM13 3.500h10M13 14h10v9H13zM13 16.500h10M4 8V4h9M4 16v3h9" />
      </svg>
      <svg viewBox="0 0 22 22" className="mt-[27px] h-[22px] w-[22px] overflow-visible" fill="none" stroke="#605e5c" strokeWidth={1.300}>
        <path d="M6 12V1h8l5 5v12q0 2-2 2h-1M13 1v6h6" />
        <text x="0" y="20" textLength="16" lengthAdjust="spacingAndGlyphs" className="fill-[#605e5c] stroke-none text-[8.5px]">DAX</text>
      </svg>
    </div>
  );
}

function FiltersPane() {
  return (
    <div className="flex h-[755px] w-10 shrink-0 flex-col items-center bg-white text-[#323130]">
      <ChevronsLeft className="mt-[12px] h-[23px] w-[23px]" strokeWidth={1.5} />
      <svg viewBox="0 0 16 16" className="mt-[17px] ml-[5px] h-[15px] w-[15px]" fill="none" stroke="#323130" strokeWidth={1.500}>
        <path d="M15 1v14L9 10H1V6h8z" />
      </svg>
      <span className="mt-[11px] text-[17px] leading-5 font-semibold tracking-[0px] [writing-mode:vertical-rl]">Filters</span>
    </div>
  );
}

function SelectionPane() {
  return (
    <div className="flex w-[45px] shrink-0 flex-col items-center border-r border-l border-[#e1dfdd] text-[#323130]">
      <ChevronsLeft className="mt-[13px] h-[23px] w-[23px]" strokeWidth={1.5} />
      <span className="mt-[15px] -ml-[6px] text-[18px] leading-5 font-semibold tracking-[0.1px] [writing-mode:vertical-rl]">Selection</span>
    </div>
  );
}

const VISUALS = [
  "stackedBar", "stackedColumn", "bar", "column", "bar100", "column100",
  "line", "area", "stackedArea", "area100", "lineColumn", "lineCluster",
  "ribbon", "waterfall", "funnel", "scatter", "pie", "donut",
  "treemap", "map", "filledMap", "azureMap", "gauge", "card",
  "multiCard", "kpi", "slicer", "table", "matrix", "r",
  "py", "key", "tree", "qa", "narrative", "trophy",
  "paginated", "cardNew", "slicerNew", "globe", "apps", "automate",
];

function VisualizationsPane() {
  return (
    <div className="flex w-[225px] shrink-0 flex-col border-r border-[#e1dfdd] text-[#323130]">
      <div className="mt-[13px] flex h-6 items-center justify-between pr-[6px] pl-[9px]">
        <span className="text-[18px] leading-6 font-semibold tracking-[-0.5px]">Visualizations</span>
        <ChevronsRight className="h-6 w-6" strokeWidth={1.5} />
      </div>
      <span className="mt-[11px] pl-[9px] text-[14px] leading-5 font-semibold tracking-[-0.3px]">Build visual</span>
      <div className="mt-1 flex h-10 items-center pl-[9px]">
        <div className="flex h-10 w-10 flex-col items-center justify-center gap-[3px] rounded-sm bg-[#d2d0ce]">
          <span className="ml-[5px] h-px w-6 self-start bg-[#323130]" />
          <span className="mt-1 h-[10px] w-[30px] border border-dashed border-[#252423] bg-[#117865]" />
          <span className="h-[10px] w-[30px] border border-dashed border-[#252423] bg-[#117865]" />
        </div>
        <svg viewBox="-0.5 -0.5 25 25" className="ml-[45px] h-8 w-8" strokeWidth={1.100}>{ART.brush}</svg>
      </div>
      <svg viewBox="0 0 225 12" className="mt-[5px] h-3 w-[225px]" fill="none" stroke="#8a8886" strokeWidth={1.300}>
        <path d="M0 10.500h20l10-9 10 9h185" />
      </svg>
      <div className="mt-[7px] grid grid-cols-[repeat(6,35px)] pl-[6px]">
        {VISUALS.map((v) => (
          <div key={v} className="flex h-[35px] items-center justify-center">
            <Art name={v} />
          </div>
        ))}
      </div>
      <div className="mt-[12px] ml-[15px] flex gap-[5px]">
        <span className="h-[3px] w-[3px] rounded-full bg-[#605e5c]" />
        <span className="h-[3px] w-[3px] rounded-full bg-[#605e5c]" />
        <span className="h-[3px] w-[3px] rounded-full bg-[#605e5c]" />
      </div>
      <div className="mt-[24px] border-t border-[#dddbd9] pt-[12px] pr-[7px] pl-[5px] text-[14.500px] leading-5 tracking-[-0.1px]">
        <div className="pl-[9px]">Values</div>
        <div className="mt-[6px] flex h-[35px] items-center border border-dashed border-[#c8c6c4] bg-white pl-[11px]">Add data fields here</div>
        <div className="mt-[14px] pl-[9px] tracking-[0.1px]">Drill through</div>
        <div className="mt-[11px] flex h-5 items-center justify-between pr-5 pl-[9px]">
          Cross-report
          <span className="flex h-[19px] w-10 items-center rounded-full border border-[#8a8886] bg-white pl-[5px] text-[10.500px] text-[#8a8886]">
            <span className="mr-0.5 h-[10px] w-[10px] rounded-full bg-[#605e5c]" />
            Off
          </span>
        </div>
        <div className="mt-[14px] flex h-5 items-center justify-between pr-5 pl-[9px] tracking-[-0.1px]">
          Keep all filters
          <span className="flex h-5 w-10 items-center rounded-full bg-[#117865] pl-[6px] text-[10.500px] text-white">
            On
            <span className="ml-1 h-[11px] w-[11px] rounded-full bg-white" />
          </span>
        </div>
        <div className="mt-[13px] flex h-[32px] items-center border border-dashed border-[#c8c6c4] bg-white pl-[9px] tracking-[0px] whitespace-nowrap">
          Add drill-through fields here
        </div>
      </div>
    </div>
  );
}

const FIELDS: { label: string; kind?: "sum" | "date" | "tree"; level: number }[] = [
  { label: "Acquiring Instit...", level: 0 },
  { label: "Bank Name", level: 0 },
  { label: "Cert", kind: "sum", level: 0 },
  { label: "City", level: 0 },
  { label: "Closing Date", kind: "date", level: 0 },
  { label: "Date Hierarc...", kind: "tree", level: 1 },
  { label: "Year", level: 2 },
  { label: "Quarter", level: 2 },
  { label: "Month", level: 2 },
  { label: "Day", level: 2 },
  { label: "Fund", kind: "sum", level: 0 },
  { label: "State", level: 0 },
];

const INDENT = ["pl-[33px]", "pl-[52px]", "pl-[70.5px]"];

const KIND_ICON: Record<string, ReactNode> = {
  sum: <path d="M14 4V1.500H2L8.500 8.500 2 15.500h12V13" />,
  date: <path d="M1 4q0-3 3-3h9q3 0 3 3v9q0 3-3 3H4q-3 0-3-3zM1 5h15M4.500 8.500h2M7.500 8.500h2M10.500 8.500h2M4.500 12h2M7.500 12h2" />,
  tree: <path d="M3 0h5v4H3zM5 4v11h5M5 7.500h5M10 5.500h4.500v4H10zM10 12.500h4.500v4H10z" />,
};

function DataPane() {
  return (
    <div className="flex w-[221px] shrink-0 flex-col text-[#323130]">
      <div className="mt-[13px] flex h-6 items-center justify-between pr-[2px] pl-[10px]">
        <span className="text-[18px] leading-6 font-semibold">Data</span>
        <ChevronsRight className="h-6 w-6" strokeWidth={1.5} />
      </div>
      <div className="mt-5 ml-[5px] flex h-[34px] w-[215px] items-center rounded-sm border border-[#8a8886] text-[#605e5c]">
        <SearchIcon className="ml-[9px] h-[18px] w-[18px]" />
        <span className="ml-2 text-[16px] leading-5">Search</span>
      </div>
      <div className="mt-[10.5px] flex flex-col text-[14px] leading-5 tracking-[-0.1px]">
        <div className="flex h-[30px] items-center pl-[15px]">
          <ChevronDown className="h-[18px] w-[18px] text-[#605e5c]" strokeWidth={1.5} />
          <svg viewBox="0 0 17 17" className="ml-[2px] h-[17px] w-[17px]" fill="none" stroke="#323130" strokeWidth={1.400}>
            <path d="M1 4q0-3 3-3h9q3 0 3 3v9q0 3-3 3H4q-3 0-3-3zM1 5.500h15M1 11h15M6 1v15M11 1v15" />
          </svg>
          <span className="ml-[7px]">banklist</span>
        </div>
        {FIELDS.map((f) => (
          <div key={f.label} className={clsx("flex h-[30px] items-center whitespace-nowrap", INDENT[f.level])}>
            <span className="flex w-[22px] shrink-0 items-center">
              {(f.kind === "date" || f.kind === "tree") && (
                <ChevronDown className="h-[18px] w-[18px] text-[#605e5c]" strokeWidth={1.5} />
              )}
            </span>
            <span className="h-[15px] w-[15px] shrink-0 rounded-[2px] border border-[#605e5c]" />
            <span className={clsx("flex w-[33px] shrink-0 items-center justify-center", f.kind === "tree" ? "pr-px" : "pl-[2px]")}>
              {f.kind && (
                <svg viewBox="0 0 17 17" className="h-[17px] w-[17px]" fill="none" stroke="#323130" strokeWidth={1.400}>
                  {KIND_ICON[f.kind]}
                </svg>
              )}
            </span>
            {f.label}
          </div>
        ))}
      </div>
    </div>
  );
}

function PageTabs() {
  return (
    <div className="flex h-[46px] w-[1374px] shrink-0 items-stretch border-b border-[#e1dfdd] text-[14.500px] text-[#494745]">
      <div className="flex w-[53px] flex-col items-center">
        <svg viewBox="0 0 26 20" className="mt-[9px] h-5 w-[26px]" fill="none" stroke="#494745" strokeWidth={1.600}>
          <path d="M1.500 1.500h23v13h-23zM13 14.500V18M8 18.500h10" />
        </svg>
        <span className="mt-[7px] h-[2.5px] w-[29px] bg-[#117865]" />
      </div>
      <svg viewBox="0 0 17 26" className="mt-[6px] ml-[21px] h-[26px] w-[17px]" fill="none" stroke="#494745" strokeWidth={1.600}>
        <rect x="1" y="1" width="15" height="24" rx="1.500" />
        <path d="M7 21.500h3" />
      </svg>
      <span className="mt-[18px] ml-[26px] h-0 w-0 border-y-[5px] border-r-[6px] border-y-transparent border-r-[#c8c6c4]" />
      <span className="mt-[18px] ml-[21px] h-0 w-0 border-y-[5px] border-l-[6px] border-y-transparent border-l-[#c8c6c4]" />
      <div className="relative ml-[9px] flex w-[90.5px] items-center justify-center border-b-[5px] border-[#117865] bg-white pt-[7px] font-semibold tracking-[-0.3px] text-[#252423]">
        home
        <span className="absolute top-[5px] right-[6px] text-[12px] leading-4 font-normal">x</span>
      </div>
      <div className="flex w-[84px] items-center justify-center border-r border-l border-[#c8c6c4] bg-white pt-1">table</div>
      <div className="flex w-[79.5px] items-center justify-center border-r border-[#dddbd9] bg-white pt-1">map</div>
      <div className="flex w-[95.5px] items-center justify-center bg-white pt-1">tooltip</div>
      <div className="flex w-[49px] items-center justify-center bg-[#117865] pb-[3px]">
        <svg viewBox="0 0 14 14" className="h-3.5 w-3.5" stroke="#fff" strokeWidth={3.500}>
          <path d="M7 0v14M0 7h14" />
        </svg>
      </div>
    </div>
  );
}

function StatusBar() {
  return (
    <div className="flex h-7 shrink-0 items-center border-t border-[#e1dfdd] bg-[#f3f2f1] pl-1 text-[14.500px] text-[#494745]">
      <span className="mt-[2px] tracking-[-0.05px]">Page 1 of 4</span>
      <span className="ml-auto h-[2px] w-[6px] bg-[#605e5c]" />
      <div className="relative ml-[6px] flex h-4 w-[125px] items-center">
        <span className="h-px w-full bg-[#a19f9d]" />
        <span className="absolute left-[48px] h-[13px] w-[5px] bg-[#605e5c]" />
        <span className="absolute left-[62px] h-2 w-px bg-[#a19f9d]" />
      </div>
      <svg viewBox="0 0 10 10" className="ml-[7px] h-[10px] w-[10px]" stroke="#494745" strokeWidth={1.800}>
        <path d="M5 0v10M0 5h10" />
      </svg>
      <span className="ml-[17px] w-[29px] text-[14px] tracking-[-0.3px] text-[#797775]">83%</span>
      <svg viewBox="0 0 20 16" className="mr-[18px] ml-[23px] h-4 w-5" fill="none" stroke="#605e5c" strokeWidth={1.800}>
        <rect x="1" y="1" width="18" height="14" />
        <path d="M4 6V4h3M13 4h3v2M4 10v2h3M13 12h3v-2" />
      </svg>
    </div>
  );
}

/* ---------- Windows taskbar ---------- */

function ChromeIcon({ badge }: { badge?: boolean }) {
  return (
    <svg viewBox="0 0 32 32" className="h-[31px] w-[31px]">
      <circle cx="16" cy="16" r="15" fill="#fff" />
      <path d="M16 1a15 15 0 0 1 13 7.500H16a7.500 7.500 0 0 0-6.500 11L3 8.500A15 15 0 0 1 16 1z" fill="#e33b2e" />
      <path d="M29 8.500A15 15 0 0 1 15 31l7.500-11.500A7.500 7.500 0 0 0 16 8.500z" fill="#fcc934" />
      <path d="M3 8.500A15 15 0 0 0 15 31l7-11.500a7.500 7.500 0 0 1-12.500 0z" fill="#2ba24c" />
      <circle cx="16" cy="16" r="7.500" fill="#fff" />
      <circle cx="16" cy="16" r="5.800" fill="#2f7de1" />
      {badge && <circle cx="24" cy="23" r="8" fill="#7b3fa0" />}
      {badge && <text x="20" y="27" className="fill-white text-[11px]">M</text>}
    </svg>
  );
}

const APPS: { name: string; open?: boolean; active?: boolean; icon: ReactNode }[] = [
  {
    name: "explorer",
    open: true,
    icon: (
      <svg viewBox="0 0 30 26" className="h-[25px] w-[30px]">
        <path d="M1 2q0-1 1-1h9l3 3h14q1 0 1 1v18H1z" fill="#e3a21a" />
        <path d="M1 7h28v17H1z" fill="#fbd35c" />
        <path d="M7 25V16q0-2 2-2h12q2 0 2 2v9h-4v-6h-8v6z" fill="#2d8fdd" />
      </svg>
    ),
  },
  {
    name: "store",
    icon: (
      <svg viewBox="0 0 30 30" className="h-[30px] w-[30px]">
        <path d="M8 8V2h14v6" fill="none" stroke="#3aa3e3" strokeWidth="2" />
        <path d="M1 6h28v20q0 4-4 4H5q-4 0-4-4z" fill="#f3f3f3" />
        <path d="M9 12h5v5H9z" fill="#e8503a" /><path d="M16 12h5v5h-5z" fill="#7fba3c" />
        <path d="M9 19h5v5H9z" fill="#2d8fdd" /><path d="M16 19h5v5h-5z" fill="#f5b82e" />
      </svg>
    ),
  },
  {
    name: "mail",
    icon: (
      <svg viewBox="0 0 32 30" className="h-[30px] w-[32px]">
        <path d="M0 11L16 0l16 11z" fill="#1057a0" />
        <path d="M0 11h32v18H0z" fill="#1f8fe0" />
        <path d="M1 11h30L16 20z" fill="#e8f3fb" />
        <path d="M0 29l14-10h4l14 10z" fill="#3da2ec" />
      </svg>
    ),
  },
  {
    name: "telegram",
    open: true,
    icon: (
      <svg viewBox="0 0 32 34" className="h-[34px] w-[32px]">
        <circle cx="15" cy="15" r="14" fill="#2a9fe0" />
        <path d="M5 15l18-8-3 16-6-4-3 3v-5l8-7-10 6z" fill="#fff" />
        <rect x="14" y="19" width="18" height="15" rx="4" fill="#e8453c" />
        <text x="15.500" y="30.500" textLength="15" className="fill-white text-[9.500px]">134</text>
      </svg>
    ),
  },
  {
    name: "clock",
    icon: (
      <svg viewBox="0 0 32 32" className="h-[31px] w-[31px]">
        <path d="M1 14h30v17H1z" fill="#77758c" />
        <circle cx="16" cy="15" r="14.500" fill="#b9b9bd" />
        <circle cx="16" cy="15" r="12" fill="#f3f1ee" />
        <path d="M16 15L8 11M16 15l8-5M16 15v9" stroke="#2c2c2c" strokeWidth="2.500" />
      </svg>
    ),
  },
  {
    name: "visual studio",
    icon: (
      <svg viewBox="0 0 30 30" className="h-[30px] w-[30px]">
        <path d="M21 0l8 3v24l-8 3L10 18l-6 5-3-2V9l3-2 6 5z" fill="#8c56c4" />
        <path d="M21 8l-7 7 7 7z" fill="#201840" /><path d="M4 11v8l4-4z" fill="#201840" />
        <path d="M21 0l8 3v24l-8 3z" fill="#c9a3ec" />
      </svg>
    ),
  },
  { name: "chrome", icon: <ChromeIcon /> },
  {
    name: "spotify",
    open: true,
    icon: (
      <svg viewBox="0 0 30 30" className="h-[30px] w-[30px]" fill="none" stroke="#111" strokeLinecap="round">
        <circle cx="15" cy="15" r="14.500" fill="#2fd566" stroke="none" />
        <path d="M6 10q9-3 18 2" strokeWidth="3" /><path d="M7 15.500q8-2.500 15 1.500" strokeWidth="2.500" /><path d="M8 20.500q7-2 12 1" strokeWidth="2" />
      </svg>
    ),
  },
  {
    name: "power bi",
    open: true,
    active: true,
    icon: (
      <svg viewBox="0 0 24 30" className="h-[30px] w-6">
        <path d="M12 0h10q1 0 1 1v28H12z" fill="#d99a1c" />
        <path d="M6 8h10q1 0 1 1v20H6z" fill="#efb92e" />
        <path d="M0 16h10q1 0 1 1v12H1q-1 0-1-1z" fill="#f9dc6b" />
      </svg>
    ),
  },
  {
    name: "word",
    open: true,
    icon: (
      <svg viewBox="0 0 30 28" className="h-[26px] w-[28px]">
        <path d="M14 3h15v22H14z" fill="#f4f7fb" />
        <path d="M18 7h8M18 11h8M18 15h8M18 19h8" stroke="#2b579a" strokeWidth="1.500" />
        <path d="M0 3l17-3v28L0 25z" fill="#2b5797" />
        <text x="2" y="19" className="fill-white text-[13px] font-bold">W</text>
      </svg>
    ),
  },
  { name: "chrome profile", open: true, icon: <ChromeIcon badge /> },
  { name: "settings", open: true, icon: <Settings className="h-7 w-7 text-white" strokeWidth={2.8} /> },
  {
    name: "whatsapp",
    open: true,
    icon: (
      <svg viewBox="0 0 42 36" className="ml-2 h-9 w-[42px]">
        <path d="M2 30l2-8A13.500 13.500 0 1 1 9 27.500z" fill="#201840" stroke="#2fd566" strokeWidth="3" />
        <path d="M10 9l3-1 2 4-2 2q2 4 5 5l2-2 4 2-1 3C16 24 9 17 10 9z" fill="#fff" />
        <circle cx="31" cy="24" r="10.500" fill="#33313d" stroke="#777" />
        <text x="23.500" y="29" className="fill-white text-[13px] font-semibold">10</text>
      </svg>
    ),
  },
];

function Cheetah() {
  return (
    <svg viewBox="0 0 100 49" className="ml-auto h-[49px] w-[100px]">
      <path d="M0 49q20-10 50-10h50v10z" fill="#cdb163" />
      <path d="M10 49q30-9 70-4l20 4z" fill="#a3904c" />
      <path
        d="M14 11l3 2 5-2 3 5 16 2q9-1 16-5 9-2 14 3l24 6v3l-18-4q5 4 8 8l7 11-4 1-10-11-10-5-11 3q-14 5-25 4l-12 7-12-1 9-4 4-6-11 2-5 5-4-1 5-7 11-3-1-7-4-1z"
        fill="#dcae62"
        stroke="#8b6a35"
        strokeWidth=".6"
      />
      <path d="M24 20q14 6 28 1 12-5 20 1-10 4-20 7-16 3-28-1z" fill="#f0bd92" />
      <path d="M28 18h1M34 19h1M40 20h1M46 18h1M52 17h1M58 15h1M64 16h1M31 21h1M70 19h1" stroke="#6b4a1e" strokeWidth="1.2" />
    </svg>
  );
}

function Taskbar() {
  return (
    <div className="flex h-[51px] shrink-0 items-stretch overflow-hidden border-t-2 border-[#17141c] bg-[#201840] text-[#ece8ee]">
      <div className="flex w-[59px] items-center justify-center">
        <svg viewBox="0 0 22 22" className="h-[21px] w-[22px] fill-white">
          <path d="M0 3l9-1.300V10.500H0zM10.500 1.500L22 0v10.500H10.500zM0 11.800h9v8.700L0 19.200zM10.500 11.800H22V22l-11.500-1.500z" />
        </svg>
      </div>
      <div className="flex w-[360px] items-center border-t border-l border-[#55525a] bg-[#333234]">
        <SearchIcon className="ml-[14px] h-[21px] w-[21px] text-[#d8d5d8]" />
        <span className="-mt-0.5 ml-[14px] text-[18px] leading-6 tracking-[-0.05px] whitespace-nowrap text-[#c9c6c9]">Type here to search</span>
        <Cheetah />
      </div>
      <div className="flex w-[61px] items-center justify-center">
        <svg viewBox="0 0 22 20" className="h-5 w-[22px]" fill="none" stroke="#e8ddee" strokeWidth={1.400}>
          <path d="M1 0v3h13V0M1 6h13v8H1zM1 20v-3h13v3M20 0v5M20 11v9" />
          <path d="M18.500 6h3v4h-3z" fill="#fff" />
        </svg>
      </div>
      <div className="ml-[2px] flex">
        {APPS.map((a) => (
          <div key={a.name} className={clsx("flex w-[62px] shrink-0 flex-col items-center", a.active && "bg-[#5a5573]")}>
            <div className="flex h-[46px] items-center justify-center pt-1">{a.icon}</div>
            {a.open && <span className={clsx("h-[3px] bg-[#76b9ed]", a.active ? "w-full" : "w-[51px]")} />}
          </div>
        ))}
      </div>
      <div className="ml-auto flex items-center">
        <svg viewBox="0 0 32 32" className="h-[31px] w-8">
          <path d="M7 30a7 7 0 0 1-1-13 9 9 0 0 1 17-2 8 8 0 0 1 2 15z" fill="#bcdcf2" />
          <path d="M7 30a6 6 0 0 1-5-6h29q-1 5-6 6z" fill="#8fc0e6" />
          <circle cx="23" cy="8" r="7.500" fill="#c93a2e" />
          <path d="M23 4v7" stroke="#fff" strokeWidth="1.300" />
        </svg>
        <span className="ml-[8px] w-[64px] text-[17px] tracking-[-0.3px]">22°C</span>
        <ChevronUp className="ml-[3px] h-5 w-5" strokeWidth={1.6} />
        <svg viewBox="0 0 18 18" className="ml-[13px] h-[17px] w-[17px]" fill="none" stroke="currentColor" strokeWidth={1.300}>
          <path d="M1 17C1 8 8 1 17 1M5 17C5 10 10 5 17 5M9 17c0-4 4-8 8-8M13 17c0-2 2-4 4-4" />
          <circle cx="16" cy="16" r="1.500" fill="currentColor" />
        </svg>
        <svg viewBox="0 0 22 18" className="ml-[9px] h-[17px] w-[22px]" fill="none" stroke="currentColor" strokeWidth={1.300}>
          <path d="M1 6h3l5-4v14l-5-4H1zM12 6q2 3 0 6M15 4q4 5 0 10M18 1.500q5 7.500 0 15" />
        </svg>
        <svg viewBox="0 0 32 19" className="ml-[8px] h-[19px] w-[31px]" fill="none" stroke="currentColor" strokeWidth={1.500}>
          <rect x="1" y="1" width="30" height="17" rx="1.500" />
          <path d="M5 6h23M5 10h23" strokeDasharray="2 2" />
          <path d="M5 14h3M10 14h12M24 14h3" />
        </svg>
        <span className="ml-[13px] w-[30px] text-[15px] tracking-[-0.6px]">ENG</span>
        <div className="ml-[14px] w-[70px] text-center text-[15px] leading-[23px] tracking-[-0.6px] whitespace-nowrap">
          4:01 PM
          <br />
          4/30/2024
        </div>
        <svg viewBox="0 0 32 32" className="mt-2 ml-[22px] h-8 w-8">
          <path d="M1 2h19v16h-9l-5 5v-5H1z" fill="#fff" />
          <path d="M4 6.500h13M4 10h13M4 13.500h9" stroke="#201840" strokeWidth="1.300" />
          <circle cx="20" cy="21" r="10" fill="#2d2b33" stroke="#8a8790" />
          <path d="M17.500 18.500l3-2.500v10.500" fill="none" stroke="#fff" strokeWidth="2" />
        </svg>
        <svg viewBox="0 0 28 28" className="mr-[24px] ml-[14px] h-[27px] w-[27px]">
          <path d="M6 2q2-2 5-2h6q4 0 5 4l1 4-8 1-3 8H3q-4-1-2-6z" fill="#2a8fe6" />
          <path d="M1 13q-1 5 3 5h6l2-8H2z" fill="#35b56a" />
          <path d="M17 9h7q5 1 3 6l-3 7h-9z" fill="#d45fb0" />
          <path d="M2 17h23l2 9H4z" fill="#efb92e" />
          <path d="M18 14l8-1-2 8h-8z" fill="#f0644b" />
          <text x="8" y="25" className="fill-[#3b2a10] text-[9px] font-bold">PRE</text>
        </svg>
      </div>
    </div>
  );
}

function Watermark() {
  return (
    <svg viewBox="840 945 234 110" className="pointer-events-none absolute top-[945px] left-[840px] h-[110px] w-[234px] overflow-visible fill-[#b9b9bb]/45">
      <text x="841" y="1000" textLength="231" lengthAdjust="spacingAndGlyphs" direction="rtl" textAnchor="end" className="font-['DejaVu_Sans',sans-serif] text-[76px] font-bold">
        مستقل
      </text>
      <text x="841" y="1044" textLength="231" lengthAdjust="spacingAndGlyphs" className="font-['Liberation_Sans',sans-serif] text-[37px] font-bold">
        mostaql.com
      </text>
    </svg>
  );
}

export default function App() {
  return (
    <div className={clsx("relative flex h-[1073px] w-[1915px] flex-col overflow-hidden bg-[#f3f2f1]", SANS)}>
      <TitleBar />
      <Tabs />
      <Ribbon />
      <div className="flex h-[801px] shrink-0">
        <LeftRail />
        <div className="flex w-[1374px] shrink-0 flex-col">
          <div className="flex">
            <Canvas />
            <FiltersPane />
          </div>
          <PageTabs />
        </div>
        <SelectionPane />
        <VisualizationsPane />
        <DataPane />
      </div>
      <StatusBar />
      <Taskbar />
      <Watermark />
    </div>
  );
}
